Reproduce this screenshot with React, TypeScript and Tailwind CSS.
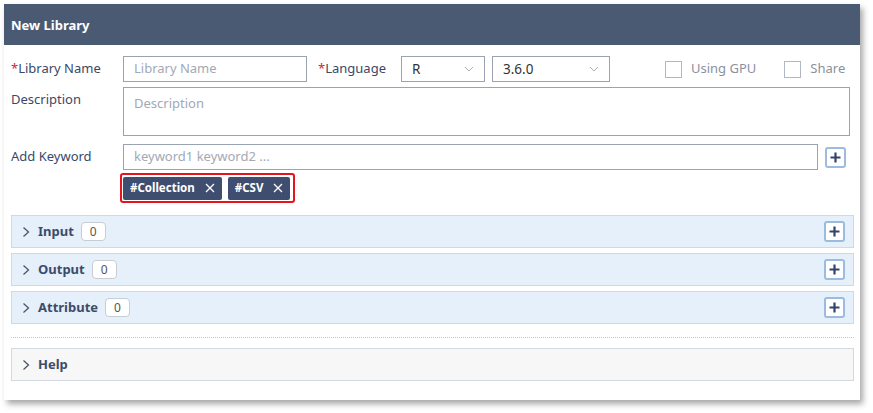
import React from "react";

const font = { fontFamily: '"Noto Sans", "Open Sans", sans-serif' };

function PlusBtn() {
  return (
    <div className="w-[21px] h-[21px] rounded-[3px] border-2 border-[#9dbbe0] bg-white flex items-center justify-center">
      <svg width="13" height="13" viewBox="0 0 13 13">
        <path d="M6.5 1.5v10M1.5 6.5h10" stroke="#334468" strokeWidth="2.2" />
      </svg>
    </div>
  );
}

function Chevron() {
  return (
    <svg width="8" height="12" viewBox="0 0 8 12" className="mr-[8px]">
      <path d="M1.5 1.5l5 4.5-5 4.5" fill="none" stroke="#4a5670" strokeWidth="1.3" />
    </svg>
  );
}

function Section({ title, count, help }: { title: string; count?: boolean; help?: boolean }) {
  return (
    <div
      className={`h-[33px] border ${help ? "border-[#d3d9e3] bg-[#f7f7f7]" : "border-[#cdd9e8] bg-[#e6f0fa]"} flex items-center pl-[10px] pr-[8px]`}
    >
      <Chevron />
      <span className="text-[13px] font-bold text-[#3d4b6a]">{title}</span>
      {count && (
        <span className="ml-[7px] h-[19px] px-[8px] rounded-[4px] border border-[#c8ccd3] bg-white text-[12px] text-[#555] flex items-center">
          0
        </span>
      )}
      <div className="flex-1" />
      {!help && <PlusBtn />}
    </div>
  );
}

function Select({ value, w }: { value: string; w: string }) {
  return (
    <div className={`${w} h-[26px] border border-[#9aa3b1] flex items-center pl-[10px] pr-[10px] text-[13.5px] text-[#333]`}>
      <span className="flex-1">{value}</span>
      <svg width="10" height="6" viewBox="0 0 10 6">
        <path d="M1 1l4 4 4-4" fill="none" stroke="#aab1bd" strokeWidth="1" />
      </svg>
    </div>
  );
}

function Tag({ text }: { text: string }) {
  return (
    <div className="h-[23px] bg-[#3f4d70] rounded-[2px] flex items-center pl-[7px] pr-[7px] text-white text-[11.5px] font-bold">
      <span>{text}</span>
      <svg width="10" height="10" viewBox="0 0 10 10" className="ml-[10px]">
        <path d="M1 1l8 8M9 1l-8 8" stroke="#fff" strokeWidth="1.3" />
      </svg>
    </div>
  );
}

export default function App() {
  return (
    <div className="w-[873px] h-[413px] bg-white relative overflow-hidden" style={font}>
      <div className="ml-[4px] mt-[4px] w-[856px] h-[396px] bg-white shadow-[3px_4px_6px_rgba(0,0,0,0.35)] flex flex-col">
        <div className="h-[41px] bg-[#4b5a73] flex items-center pl-[7px] pt-[3px] text-white text-[13px] font-bold">
          New Library
        </div>
        <div className="pl-[7px] pr-[6px] pt-[11px] flex flex-col">
          {/* Row 1 */}
          <div className="flex items-center h-[26px] text-[13px] text-[#3b4866]">
            <div className="w-[112px]">
              <span className="text-[#d0263a]">*</span>Library Name
            </div>
            <div className="w-[184px] h-[26px] border border-[#9aa3b1] flex items-center pl-[10px] text-[#a3a9b3]">
              Library Name
            </div>
            <div className="w-[94px] pl-[11px]">
              <span className="text-[#d0263a]">*</span>Language
            </div>
            <Select value="R" w="w-[84px]" />
            <div className="w-[7px]" />
            <Select value="3.6.0" w="w-[118px]" />
            <div className="ml-[55px] w-[17px] h-[17px] border border-[#b0b8c5]" />
            <span className="ml-[9px] text-[#8a919c]">Using GPU</span>
            <div className="ml-[28px] w-[17px] h-[17px] border border-[#b0b8c5]" />
            <span className="ml-[9px] text-[#8a919c]">Share</span>
          </div>
          {/* Description */}
          <div className="flex mt-[5px] text-[13px] text-[#3b4866]">
            <div className="w-[112px] pt-[3px]">Description</div>
            <div className="w-[727px] h-[49px] border border-[#9aa3b1] pl-[10px] pt-[6px] text-[#a3a9b3]">Description</div>
          </div>
          {/* Keyword */}
          <div className="flex items-center mt-[8px] text-[13px] text-[#3b4866]">
            <div className="w-[112px]">Add Keyword</div>
            <div className="w-[695px] h-[26px] border border-[#9aa3b1] pl-[10px] flex items-center text-[#a3a9b3]">
              keyword1 keyword2 ...
            </div>
            <div className="ml-[7px]">
              <PlusBtn />
            </div>
          </div>
          {/* Tags */}
          <div className="ml-[109px] mt-[3px] w-[175px] h-[30px] border-2 border-[#e8141c] rounded-[3px] flex items-center pl-[1px] gap-[6px]">
            <Tag text="#Collection" />
            <Tag text="#CSV" />
          </div>
          {/* Sections */}
          <div className="mt-[12px] flex flex-col gap-[5px]">
            <Section title="Input" count />
            <Section title="Output" count />
            <Section title="Attribute" count />
          </div>
          <div className="mt-[13px] border-t border-dotted border-[#c4c8ce]" />
          <div className="mt-[10px]">
            <Section title="Help" help />
          </div>
        </div>
      </div>
    </div>
  );
}
